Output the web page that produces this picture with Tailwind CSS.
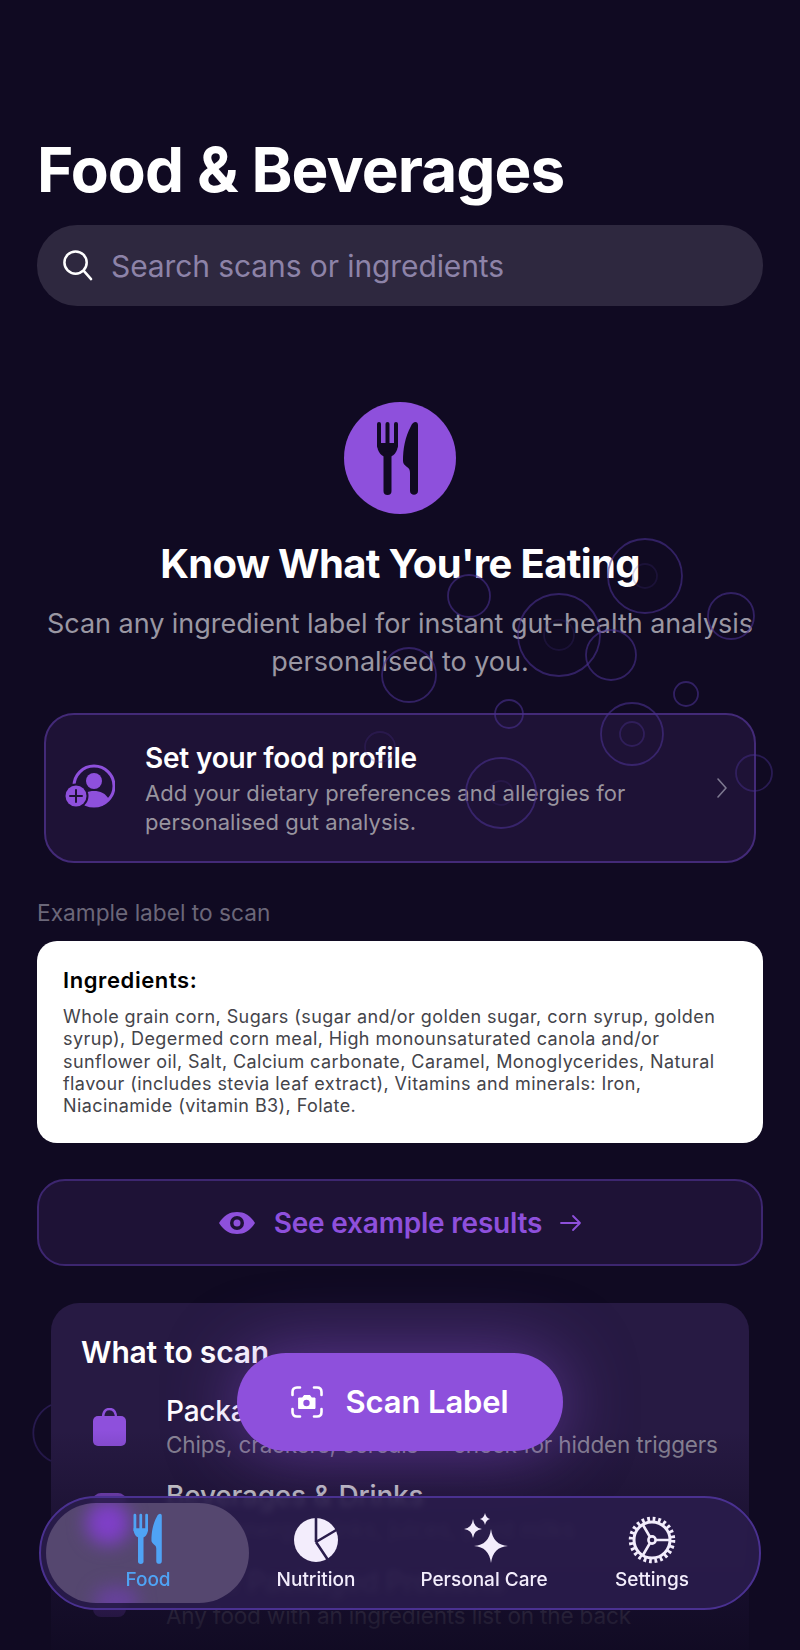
<!DOCTYPE html>
<html lang="en">
<head>
  <meta charset="UTF-8" />
  <meta name="viewport" content="width=device-width, initial-scale=1.0"/>
  <title>Food &amp; Beverages</title>
  <script src="https://cdn.jsdelivr.net/npm/@tailwindcss/browser@4"></script>
</head>
<body class="bg-[#100a22] font-[Inter,sans-serif]">
  <div class="relative w-[800px] h-[1650px] overflow-hidden px-[37px] pt-[134px] bg-[#100a22]">

    <h1 class="text-[62px] leading-[72px] font-bold text-white tracking-[-0.9px]">Food &amp; Beverages</h1>

    <!-- search -->
    <div class="mt-[19px] h-[81px] rounded-[40px] bg-[#2e283f] flex items-center pl-[25px] gap-[18px]">
      <svg class="w-[31px] h-[31px]" viewBox="0 0 32 32" fill="none" stroke="white" stroke-width="2.6" stroke-linecap="round"><circle cx="14" cy="13" r="11.5"/><path d="M22.5 21.5 L30 30"/></svg>
      <span class="text-[30px] mt-[2px] text-[#8d83a8] tracking-[-0.1px]">Search scans or ingredients</span>
    </div>

    <!-- hero -->
    <div class="mt-[96px] mx-auto w-[112px] h-[112px] rounded-full bg-[#8e50dc] flex items-center justify-center">
      <svg class="w-[42px] h-[74px] ml-[-4px] text-[#100a22]" viewBox="0 0 42 74" fill="currentColor">
        <rect x="0" y="1" width="4" height="26" rx="2"/><rect x="8.5" y="1" width="4" height="26" rx="2"/><rect x="17" y="1" width="4" height="26" rx="2"/>
        <path d="M0 22 C0 32 5 36 10.5 36 C16 36 21 32 21 22 Z"/><rect x="6.5" y="30" width="8" height="44" rx="4"/>
        <path d="M41 4 C41 0 36 0 34 5 C28 16 26 28 26 40 C26 43 28 44 30 46 C32 47 33 49 33 52 L33 70 C33 75 41 75 41 70 Z"/>
      </svg>
    </div>
    <h2 class="mt-[26px] text-[40px] leading-[48px] font-bold text-white text-center tracking-[-0.65px]">Know What You're Eating</h2>
    <p class="mt-[17px] text-[27px] leading-[38px] text-[#9a97a3] text-center tracking-[-0.04px]">Scan any ingredient label for instant gut-health analysis<br>personalised to you.</p>

    <!-- food profile -->
    <div class="mt-[32px] mx-[7px] h-[150px] rounded-[30px] border-2 border-[#432a78] bg-[#1e1236] flex items-center pl-[19px] pr-[26px]">
      <svg class="w-[50px] h-[44px] shrink-0 mt-[-4px]" viewBox="0 0 50 44">
        <circle cx="29" cy="22" r="20" fill="none" stroke="#8e50dc" stroke-width="3"/>
        <circle cx="29" cy="17" r="8" fill="#8e50dc"/>
        <path d="M14 36 C17 29 23 27 29 27 C35 27 41 29 44 36 C40 41 35 43 29 43 C23 43 18 41 14 36 Z" fill="#8e50dc"/>
        <circle cx="11" cy="32" r="12.5" fill="#1e1236"/>
        <circle cx="11" cy="32" r="10.5" fill="#8e50dc"/>
        <path d="M11 26 V38 M5 32 H17" stroke="#1e1236" stroke-width="2" stroke-linecap="round"/>
      </svg>
      <div class="ml-[30px] flex-1">
        <div class="text-[28px] leading-[36px] font-semibold text-white tracking-[-0.2px]">Set your food profile</div>
        <div class="mt-[3px] text-[22px] leading-[29px] text-[#98949f] tracking-[0.05px]">Add your dietary preferences and allergies for<br>personalised gut analysis.</div>
      </div>
      <svg class="w-[12px] h-[20px]" viewBox="0 0 12 20" fill="none" stroke="#7d7890" stroke-width="1.6" stroke-linecap="round" stroke-linejoin="round"><path d="M2 1 L10 10 L2 19"/></svg>
    </div>

    <!-- example label -->
    <div class="mt-[36px] text-[22.7px] leading-[28px] text-[#6b6779]">Example label to scan</div>
    <div class="mt-[14px] h-[202px] rounded-[20px] bg-white pl-[26px] pt-[25px]">
      <div class="text-[22px] leading-[28px] font-semibold text-black tracking-[0.6px]">Ingredients:</div>
      <p class="mt-[12px] text-[18px] leading-[22.3px] text-[#44444a] tracking-[0.42px]">Whole grain corn, Sugars (sugar and/or golden sugar, corn syrup, golden<br>syrup), Degermed corn meal, High monounsaturated canola and/or<br>sunflower oil, Salt, Calcium carbonate, Caramel, Monoglycerides, Natural<br>flavour (includes stevia leaf extract), Vitamins and minerals: Iron,<br>Niacinamide (vitamin B3), Folate.</p>
    </div>

    <!-- example results -->
    <div class="mt-[36px] h-[87px] rounded-[28px] border-2 border-[#3d2670] bg-[#1e1236] flex items-center justify-center text-[#8e50dc]">
      <svg class="w-[38px] h-[24px]" viewBox="0 0 38 24"><path d="M1 12 C6 4 12 1 19 1 C26 1 32 4 37 12 C32 20 26 23 19 23 C12 23 6 20 1 12 Z" fill="#8e50dc"/><circle cx="19" cy="12" r="7" fill="#1e1236"/><circle cx="19" cy="12" r="3.5" fill="#8e50dc"/></svg>
      <span class="ml-[18px] text-[28px] font-semibold tracking-[-0.2px]">See example results</span>
      <svg class="ml-[18px] w-[22px] h-[18px]" viewBox="0 0 22 18" fill="none" stroke="#8e50dc" stroke-width="1.8" stroke-linecap="round" stroke-linejoin="round"><path d="M1 9 H20 M13 2 L20 9 L13 16"/></svg>
    </div>

    <!-- what to scan -->
    <div class="mt-[37px] mx-[14px] h-[400px] rounded-[28px] bg-[#271a43] pl-[30px] pt-[29px]">
      <div class="text-[30px] leading-[40px] font-semibold text-white tracking-[-0.2px]">What to scan</div>
      <div class="mt-[21px] flex items-center">
        <svg class="ml-[12px] w-[33px] h-[38px] shrink-0" viewBox="0 0 33 38"><path d="M10 10 C10 3 13 1 16.5 1 C20 1 23 3 23 10" fill="none" stroke="#8e50dc" stroke-width="2.4"/><rect x="0" y="8" width="33" height="30" rx="5" fill="#8e50dc"/></svg>
        <div class="ml-[40px]">
          <div class="text-[28px] leading-[36px] font-medium text-white tracking-[-0.2px]">Packaged Foods</div>
          <div class="text-[22.5px] leading-[32px] text-[#8d8899] tracking-[-0.15px] whitespace-nowrap">Chips, crackers, cereals — check for hidden triggers</div>
        </div>
      </div>
      <div class="mt-[17px] flex items-center">
        <svg class="ml-[12px] w-[33px] h-[38px] shrink-0" viewBox="0 0 33 38"><rect x="0" y="0" width="33" height="38" rx="8" fill="#8e50dc"/></svg>
        <div class="ml-[40px]">
          <div class="text-[28px] leading-[36px] font-medium text-white tracking-[-0.2px]">Beverages &amp; Drinks</div>
          <div class="text-[22.5px] leading-[32px] text-[#8d8899] tracking-[-0.15px] whitespace-nowrap">Soda, energy drinks, juices, plant milks</div>
        </div>
      </div>
      <div class="mt-[18px] flex items-center">
        <svg class="ml-[12px] w-[33px] h-[38px] shrink-0" viewBox="0 0 33 38"><rect x="0" y="0" width="33" height="38" rx="8" fill="#8e50dc"/></svg>
        <div class="ml-[40px]">
          <div class="text-[28px] leading-[36px] font-medium text-white tracking-[-0.2px]">Other Packaged Products</div>
          <div class="text-[22.5px] leading-[32px] text-[#8d8899] tracking-[-0.15px] whitespace-nowrap">Any food with an ingredients list on the back</div>
        </div>
      </div>
    </div>

    <!-- bubbles drifting over the content -->
    <svg class="absolute left-0 top-0 w-[800px] h-[1650px] pointer-events-none" viewBox="0 0 800 1650" fill="none" stroke="#4a3190" stroke-width="1.8" stroke-opacity="0.6">
      <circle cx="645" cy="576" r="37"/><circle cx="645" cy="576" r="12" stroke-opacity="0.2"/>
      <circle cx="469" cy="596" r="21"/>
      <circle cx="559" cy="635" r="41"/><circle cx="559" cy="635" r="15" stroke-opacity="0.2"/>
      <circle cx="611" cy="655" r="25"/><circle cx="731" cy="616" r="23"/>
      <circle cx="409" cy="675" r="27"/><circle cx="509" cy="714" r="14"/>
      <circle cx="686" cy="694" r="12"/><circle cx="632" cy="734" r="31"/><circle cx="632" cy="734" r="12" stroke-opacity="0.4"/>
      <circle cx="501" cy="793" r="35"/><circle cx="501" cy="793" r="12" stroke-opacity="0.2"/>
      <circle cx="754" cy="773" r="18" stroke-opacity="0.45"/><circle cx="380" cy="747" r="15" stroke-opacity="0.25"/>
      <path d="M51 1405 A 31 31 0 0 0 51 1461" stroke-opacity="0.4"/>
    </svg>

    <!-- bottom fade -->
    <div class="absolute left-0 right-0 bottom-0 h-[220px] bg-gradient-to-b from-[#100a22]/0 via-[#100a22]/55 to-[#100a22]/95 pointer-events-none"></div>

    <!-- scan button -->
    <div class="absolute left-[237px] top-[1353px] w-[326px] h-[98px] rounded-[49px] bg-[#8e50dc] shadow-[0_0_70px_rgba(142,80,220,0.5)] flex items-center justify-center gap-[22px] text-white">
      <svg class="w-[32px] h-[32px]" viewBox="0 0 32 32" fill="none" stroke="white" stroke-width="2.6" stroke-linecap="round">
        <path d="M1.5 9 V6 C1.5 3 3 1.5 6 1.5 H9 M23 1.5 H26 C29 1.5 30.5 3 30.5 6 V9 M30.5 23 V26 C30.5 29 29 30.5 26 30.5 H23 M9 30.5 H6 C3 30.5 1.5 29 1.5 26 V23"/>
        <path d="M8 12 H11.5 L13 9.5 H19 L20.5 12 H24 V22.5 H8 Z" fill="white" stroke-width="1" stroke-linejoin="round"/>
        <circle cx="15.5" cy="17" r="3.2" fill="#8e50dc" stroke="none"/>
      </svg>
      <span class="text-[31px] font-semibold tracking-[-0.1px]">Scan Label</span>
    </div>

    <!-- tab bar -->
    <div class="absolute left-[39px] top-[1496px] w-[722px] h-[114px] rounded-[57px] border-2 border-[#4a3190] bg-[#2a1d4c]/88 backdrop-blur-[3px] flex items-center">
      <div class="absolute left-[5px] top-[5px] w-[203px] h-[100px] rounded-[50px] bg-[#55476f] overflow-hidden">
        <div class="absolute left-[40px] top-[-2px] w-[44px] h-[44px] rounded-full bg-[#7f3fc8] blur-[9px]"></div>
        <div class="absolute left-[48px] top-[84px] w-[44px] h-[30px] rounded-full bg-[#6f3fb0]/70 blur-[9px]"></div>
      </div>
      <div class="relative w-full h-full text-[19px] font-medium text-[#f3edfc] grid grid-cols-[168px_168px_168px_168px] pl-[23px]">
        <div class="flex flex-col items-center text-[#4fa3f5] pt-[15px]">
          <svg class="w-[30px] h-[51px] text-[#4fa3f5]" viewBox="0 0 42 74" fill="currentColor">
            <rect x="0" y="1" width="4" height="26" rx="2"/><rect x="8.5" y="1" width="4" height="26" rx="2"/><rect x="17" y="1" width="4" height="26" rx="2"/>
            <path d="M0 22 C0 32 5 36 10.5 36 C16 36 21 32 21 22 Z"/><rect x="6.5" y="30" width="8" height="44" rx="4"/>
            <path d="M41 4 C41 0 36 0 34 5 C28 16 26 28 26 40 C26 43 28 44 30 46 C32 47 33 49 33 52 L33 70 C33 75 41 75 41 70 Z"/>
          </svg>
          <span class="mt-[4px] leading-[24px]">Food</span>
        </div>
        <div class="flex flex-col items-center pt-[19px]">
          <svg class="w-[46px] h-[46px]" viewBox="0 0 46 46"><circle cx="23" cy="23" r="22" fill="#f3edfc"/><path d="M23 25 L23 0 M23 25 L45 12 M23 25 L37 46" stroke="#2a1d4c" stroke-width="2.6" fill="none"/></svg>
          <span class="mt-[5px] leading-[24px]">Nutrition</span>
        </div>
        <div class="flex flex-col items-center pt-[15px]">
          <svg class="w-[50px] h-[50px]" viewBox="0 0 50 50" fill="#f3edfc">
            <path d="M32 16 Q34 32 49 33 Q34 34 32 50 Q30 34 15 33 Q30 32 32 16 Z"/>
            <path d="M14 6 Q15 15 23 16 Q15 17 14 25 Q13 17 5 16 Q13 15 14 6 Z"/>
            <path d="M26 0 Q27 5 31 6 Q27 7 26 12 Q25 7 21 6 Q25 5 26 0 Z"/>
          </svg>
          <span class="mt-[5px] leading-[24px] whitespace-nowrap">Personal Care</span>
        </div>
        <div class="flex flex-col items-center pt-[18px]">
          <svg class="w-[48px] h-[48px]" viewBox="0 0 48 48" fill="none" stroke="#f3edfc">
            <circle cx="24" cy="24" r="21" stroke-width="4.5" stroke-dasharray="2.75 2.75"/>
            <circle cx="24" cy="24" r="18" stroke-width="3"/>
            <circle cx="24" cy="24" r="3.6" stroke-width="2.6"/>
            <path d="M27.5 24 H42 M22 21 L15 9 M22 27 L15 39" stroke-width="2.6"/>
          </svg>
          <span class="mt-[4px] leading-[24px]">Settings</span>
        </div>
      </div>
    </div>
  </div>
</body>
</html>
